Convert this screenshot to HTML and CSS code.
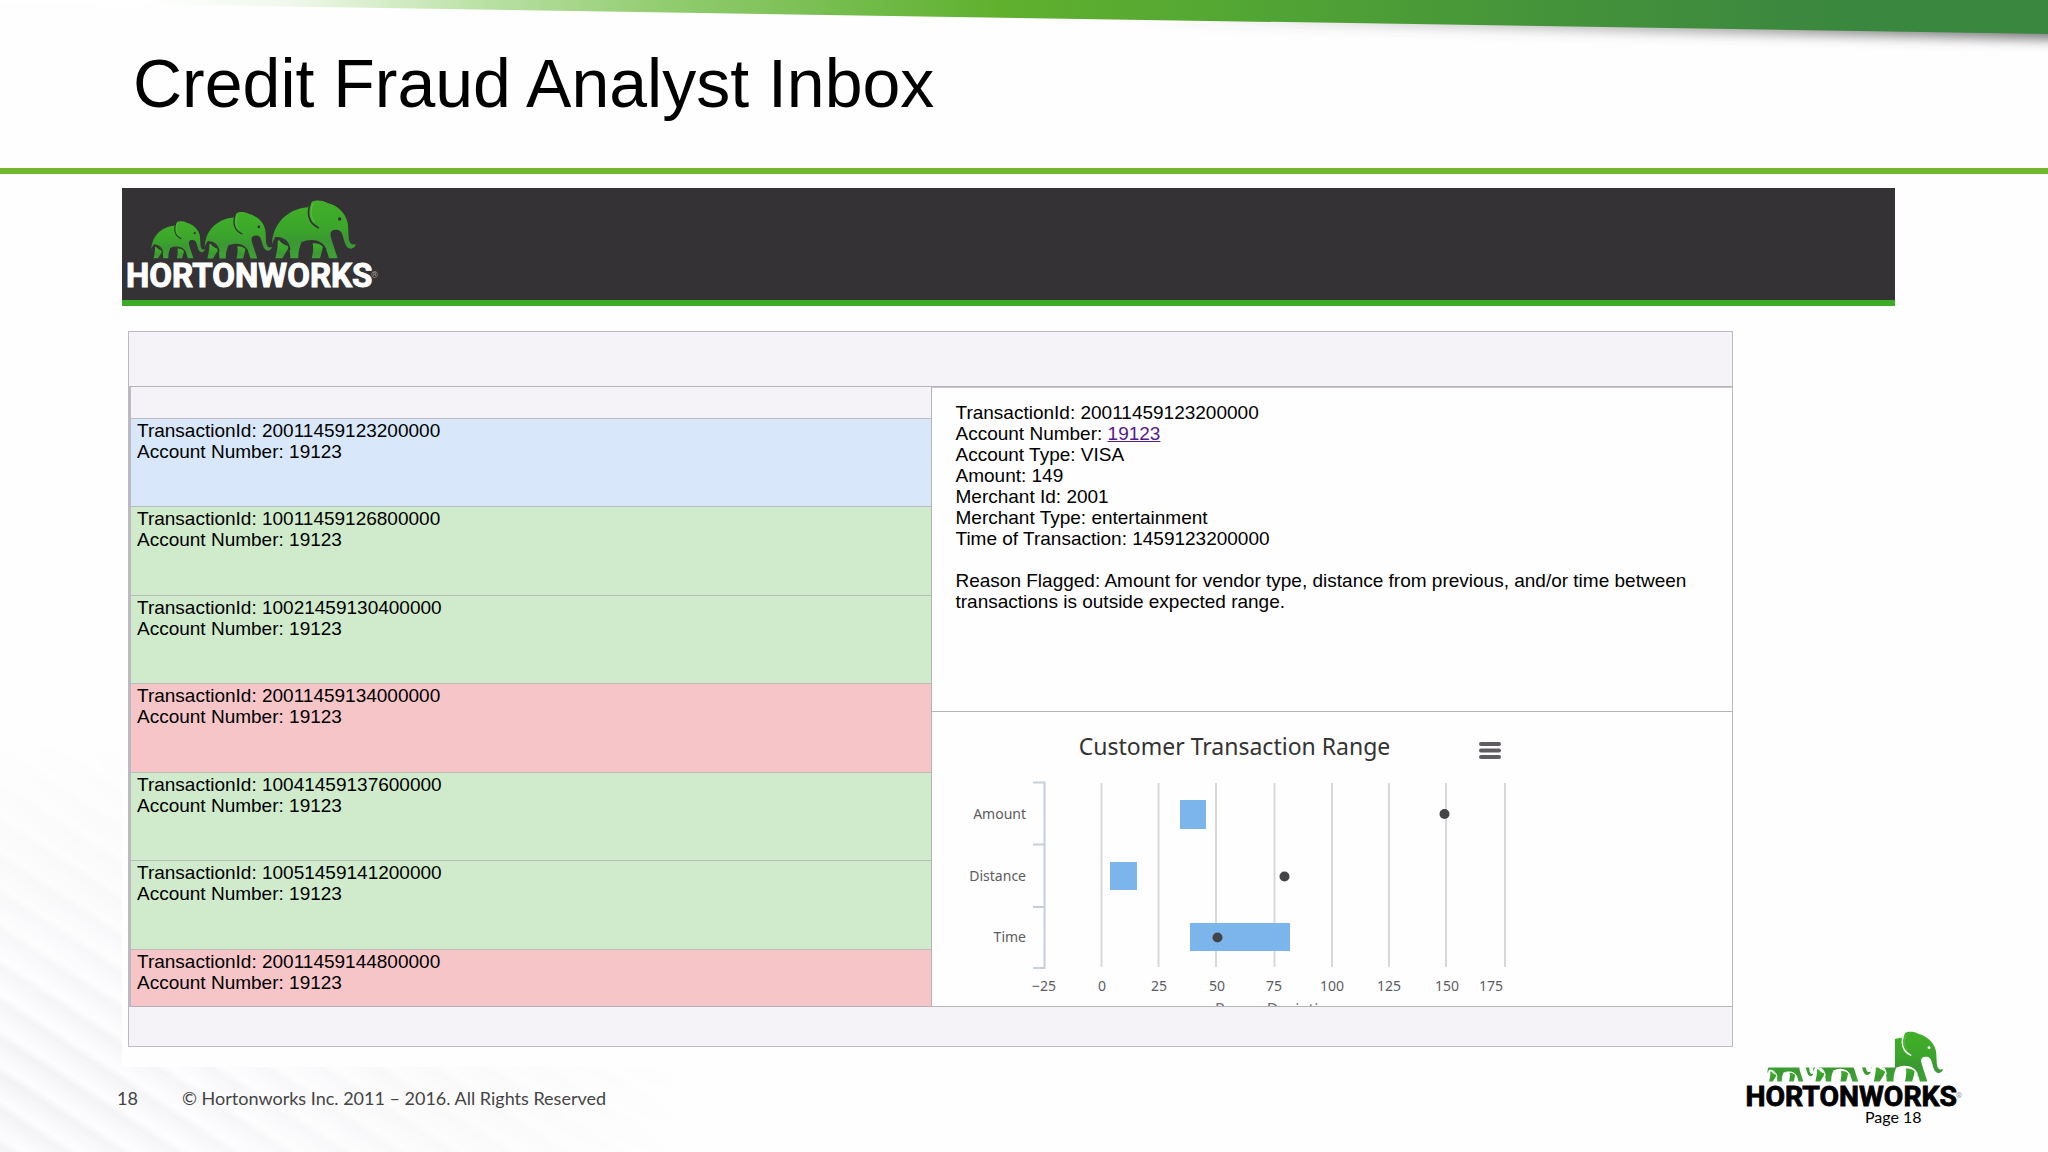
FILE: index.html
```html
<!DOCTYPE html>
<html lang="en">
<head>
<meta charset="utf-8">
<title>Credit Fraud Analyst Inbox</title>
<link rel="stylesheet" href="styles.css">
</head>
<body>
<svg class="defs" width="0" height="0" aria-hidden="true">
  <defs>
    <linearGradient id="hide" x1="0" y1="0" x2="0" y2="1">
      <stop offset="0" stop-color="#42b029"/>
      <stop offset="0.5" stop-color="#3ba52b"/>
      <stop offset="0.7" stop-color="#3b9733"/>
      <stop offset="1" stop-color="#3da335"/>
    </linearGradient>
    <clipPath id="clip-herd"><path d="M0 186H900V300H0ZM570 0H900V190H570Z"/></clipPath>
    <g id="elephant">
      <path fill="url(#hide)" d="M40 134C46 142 56 150 70 153C66 166 56 178 50 189H29C33 172 37 154 36 138ZM141 144C152 142 164 146 172 153C170 166 166 178 163 189H138C142 174 144 158 141 144Z"/>
      <path fill="url(#hide)" d="M19 147C21 88 62 42 126 36L138 20C148 13 170 14 184 22C215 30 240 52 246 82C250 106 246 134 255 144C260 149 264 149 268 145C273 147 268 158 256 160C240 159 237 140 232 124C229 108 222 102 208 103C194 105 192 114 197 130C203 150 210 170 216 189H190C186 170 178 150 162 142C144 134 118 136 106 145C100 158 98 174 98 189H74C74 174 72 160 66 148C58 136 44 128 34 126C27 128 22 136 19 147Z"/>
      <path class="seam" d="M135 20C127 42 125 60 135 77C140 87 150 93 158 97M29 128C50 124 68 138 72 162M108 143C140 129 168 138 180 162" fill="none" stroke-width="5" stroke-linecap="round"/>
      <path d="M142 24C134 44 134 62 146 80" fill="none" stroke="#6cc94e" stroke-width="2"/>
      <circle class="eye" cx="222" cy="71" r="5"/>
    </g>
    <g id="herd">
      <use href="#elephant" transform="translate(112 114) scale(.64)"/>
      <use href="#elephant" transform="translate(269 84) scale(.8)"/>
      <use href="#elephant" transform="translate(467 46)"/>
    </g>
  </defs>
</svg>

<header class="slide-head">
  <svg class="ribbon" viewBox="0 0 2048 60" preserveAspectRatio="none" aria-hidden="true">
    <defs>
      <linearGradient id="ribbon-fill">
        <stop offset="0.07" stop-color="#fff"/>
        <stop offset="0.14" stop-color="#f0f8ec"/>
        <stop offset="0.24" stop-color="#b8e0a2"/>
        <stop offset="0.32" stop-color="#94cd72"/>
        <stop offset="0.42" stop-color="#72bb4a"/>
        <stop offset="0.49" stop-color="#60b02e"/>
        <stop offset="0.6" stop-color="#53a733"/>
        <stop offset="0.75" stop-color="#45943a"/>
        <stop offset="0.9" stop-color="#3a873f"/>
      </linearGradient>
      <linearGradient id="ribbon-shade">
        <stop offset="0.2" stop-color="#555" stop-opacity="0"/>
        <stop offset="1" stop-color="#555" stop-opacity=".8"/>
      </linearGradient>
      <filter id="soft" x="-5%" y="-50%" width="110%" height="200%"><feGaussianBlur stdDeviation="6"/></filter>
    </defs>
    <path d="M900 0H2068V40L900 18Z" fill="url(#ribbon-shade)" filter="url(#soft)"/>
    <path d="M0 0H2048V34L0 2Z" fill="url(#ribbon-fill)"/>
  </svg>
  <h1>Credit Fraud Analyst Inbox</h1>
</header>

<main class="capture">
  <div class="brand-bar">
    <svg class="logo" viewBox="12 8 256 100" role="img" aria-label="Hortonworks">
      <g transform="scale(.3333)"><use href="#herd"/></g>
      <text class="wordmark" x="16" y="107">HORTONWORKS</text>
      <text class="mark" x="261" y="98">®</text>
    </svg>
  </div>

  <section class="inbox">
    <div class="inbox-head"></div>
    <div class="inbox-body">
      <div class="list">
        <div class="list-head"></div>
        <ul>
          <li class="selected">TransactionId: 20011459123200000<br>Account Number: 19123</li>
          <li class="ok">TransactionId: 10011459126800000<br>Account Number: 19123</li>
          <li class="ok">TransactionId: 10021459130400000<br>Account Number: 19123</li>
          <li class="flagged">TransactionId: 20011459134000000<br>Account Number: 19123</li>
          <li class="ok">TransactionId: 10041459137600000<br>Account Number: 19123</li>
          <li class="ok">TransactionId: 10051459141200000<br>Account Number: 19123</li>
          <li class="flagged">TransactionId: 20011459144800000<br>Account Number: 19123</li>
        </ul>
      </div>
      <div class="detail">
        <div class="facts">
          <p>TransactionId: 20011459123200000<br>
          Account Number: <a href="#19123">19123</a><br>
          Account Type: VISA<br>
          Amount: 149<br>
          Merchant Id: 2001<br>
          Merchant Type: entertainment<br>
          Time of Transaction: 1459123200000</p>
          <p>Reason Flagged: Amount for vendor type, distance from previous, and/or time between transactions is outside expected range.</p>
        </div>
        <div class="chart">
          <div class="chart-head">
            <h2>Customer Transaction Range</h2>
            <button type="button" aria-label="Chart menu">
              <svg width="22" height="17" viewBox="0 0 22 17"><path d="M2 2H20M2 8.500H20M2 15H20" stroke="#5f5d62" stroke-width="4" stroke-linecap="round"/></svg>
            </button>
          </div>
          <svg class="plot" width="606" height="250" viewBox="0 0 606 250" role="img" aria-label="Range deviation by amount, distance and time">
            <g transform="translate(-931 -770)">
              <path class="grid" d="M1100.500 783V967M1157.500 783V967M1215 783V967M1273.500 783V967M1331 783V967M1388 783V967M1445 783V967M1504 783V967"/>
              <path class="axis" d="M1032 782.500H1043.500V968H1032M1032 844.500H1043M1032 907H1043"/>
              <g fill="#7cb5ec">
                <rect x="1179" y="800" width="26" height="29"/>
                <rect x="1109" y="862" width="27" height="28"/>
                <rect x="1189" y="923" width="100" height="28"/>
              </g>
              <g fill="#434348">
                <circle cx="1443.500" cy="814" r="5"/>
                <circle cx="1283.500" cy="876.500" r="5"/>
                <circle cx="1216.500" cy="937.500" r="5"/>
              </g>
              <g class="label" text-anchor="end">
                <text x="1025" y="819">Amount</text>
                <text x="1025" y="881">Distance</text>
                <text x="1025" y="942">Time</text>
              </g>
              <g class="label" text-anchor="middle">
                <text x="1043" y="991">−25</text>
                <text x="1101" y="991">0</text>
                <text x="1158" y="991">25</text>
                <text x="1216" y="991">50</text>
                <text x="1273" y="991">75</text>
                <text x="1331" y="991">100</text>
                <text x="1388" y="991">125</text>
                <text x="1446" y="991">150</text>
                <text x="1490" y="991">175</text>
              </g>
              <text class="axis-title" x="1214" y="1015">Range Deviation</text>
            </g>
          </svg>
        </div>
      </div>
    </div>
    <div class="inbox-foot"></div>
  </section>
</main>

<footer class="slide-foot">
  <span class="num">18</span>
  <span class="legal">© Hortonworks Inc. 2011 – 2016. All Rights Reserved</span>
  <div class="foot-brand">
    <svg class="logo" viewBox="12 8 256 100" role="img" aria-label="Hortonworks">
      <g transform="scale(.3333)"><g clip-path="url(#clip-herd)"><use href="#herd"/></g></g>
      <text class="wordmark" x="16" y="107">HORTONWORKS</text>
      <text class="mark" x="261" y="98">®</text>
    </svg>
    <span class="page">Page 18</span>
  </div>
</footer>
</body>
</html>
```
FILE: styles.css
```css
* { box-sizing: border-box; }

body {
  margin: 0;
  min-height: 100vh;
  display: flex;
  flex-direction: column;
  position: relative;
  background: #fefefe;
  color: #000;
  font-family: "Liberation Sans", Arial, sans-serif;
  font-size: 19px;
  line-height: 21px;
}

/* Ribbed texture that fades out from the lower left corner */
body::before {
  content: "";
  position: absolute;
  left: 0;
  bottom: 0;
  width: 700px;
  height: 420px;
  z-index: -1;
  background: repeating-linear-gradient(213deg, #fdfcfe 0, #f2f1f4 8px, #f8f7fa 20px, #fdfcfe 30px);
  mask-image: radial-gradient(ellipse farthest-side at 0 85%, #000 0, transparent 100%);
}

.defs { position: absolute; }

.slide-head {
  position: relative;
  padding: 44px 133px 46px;
  border-bottom: 6px solid #6fba2e;
}
.ribbon {
  position: absolute;
  top: 0;
  left: 0;
  width: 100%;
  height: 60px;
}
h1 {
  position: relative;
  margin: 0;
  font-size: 68px;
  line-height: 78px;
  font-weight: 400;
}

.capture {
  margin: 14px 153px 0 122px;
  padding-bottom: 20px;
  background: #fefefe;
}
.brand-bar {
  --gap: #343234;
  height: 118px;
  background: #343234;
  border-bottom: 6px solid #3cac26;
  color: #fff;
}
.logo {
  display: block;
  width: 256px;
  height: 100px;
  overflow: visible;
}
.seam { stroke: var(--gap); }
.eye { fill: var(--gap); }
.wordmark {
  font: 700 33px Roboto, sans-serif;
  fill: currentColor;
  stroke: currentColor;
  stroke-width: 1px;
}
.mark {
  font: 700 9px Roboto, sans-serif;
  fill: #999;
}

.inbox {
  margin: 25px 162px 0 6px;
  border: 1px solid #bcbac0;
}
.inbox-head { height: 54px; background: #f5f3f7; }
.inbox-foot { height: 39px; background: #f5f3f7; }
.inbox-body {
  display: grid;
  grid-template-columns: 1fr 1fr;
  height: 621px;
  border-top: 1px solid #b5b3b8;
  border-bottom: 1px solid #b5b3b8;
}
.list {
  overflow: hidden;
  border-left: 2px solid #bcbac0;
}
.list-head { height: 31px; background: #f5f3f7; }
ul {
  margin: 0;
  padding: 0;
  list-style: none;
  display: grid;
  grid-auto-rows: 1fr;
  min-height: 619px;
}
li {
  padding: 1px 6px;
  border-top: 1px solid #b9bdbb;
}
.selected { background: #d8e8fa; }
.ok { background: #d0ebcc; }
.flagged { background: #f6c5c8; }

.detail {
  display: flex;
  flex-direction: column;
  overflow: hidden;
  border-left: 1px solid #b5b3b8;
  border-top: 1px solid #c8c6cc;
}
.facts {
  flex: 0 0 323px;
  padding: 14px 24px;
}
p { margin: 0 0 21px; }
a { color: #551a8b; }

.chart {
  flex: 1;
  overflow: hidden;
  border-top: 1px solid #b5b3b8;
}
.chart-head {
  display: grid;
  grid-template-columns: 1fr auto 1fr;
  align-items: center;
  width: 606px;
  padding-top: 19px;
}
h2 {
  grid-column: 2;
  margin: 0;
  font: 400 23px/30px "Noto Sans", sans-serif;
  color: #333;
}
button {
  justify-self: end;
  display: flex;
  margin-right: 37px;
  padding: 8px 0 0;
  border: 0;
  background: none;
}
.plot { display: block; margin-top: 9px; }
.grid { stroke: #d9d7dc; stroke-width: 2; }
.axis { fill: none; stroke: #c4cfde; stroke-width: 2; }
.label { font: 14px "Noto Sans", sans-serif; fill: #5c5b5f; }
.axis-title { font: 16px "Noto Sans", sans-serif; fill: #707073; }

.slide-foot {
  display: flex;
  align-items: flex-start;
  padding: 0 86px 0 117px;
  color: #444;
  font: 18px/22px Lato, sans-serif;
}
.num { width: 65px; padding-top: 20px; }
.legal { padding-top: 20px; }
.foot-brand {
  --gap: #fff;
  margin: -46px 0 0 auto;
  display: flex;
  flex-direction: column;
  color: #000;
}
.foot-brand .logo { width: 220px; height: 86px; }
.page { padding-left: 123px; font-size: 16px; line-height: 20px; }
```
